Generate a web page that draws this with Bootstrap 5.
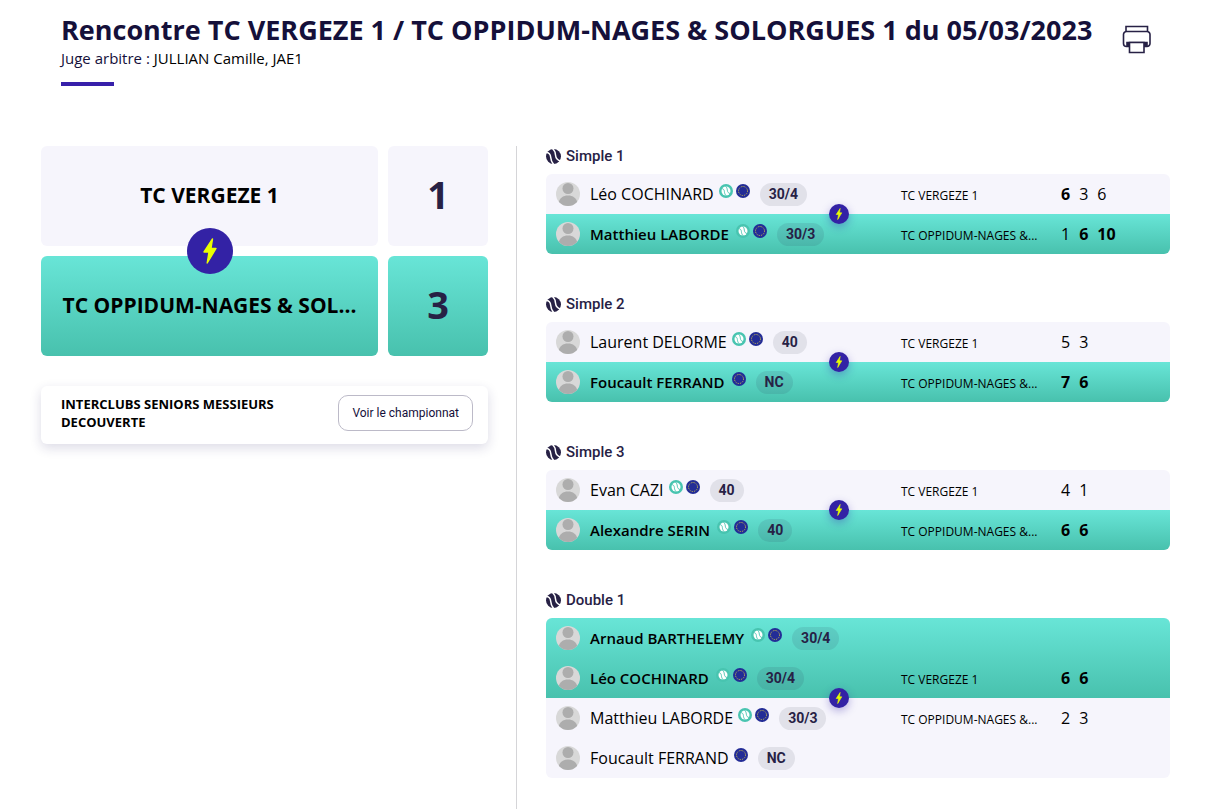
<!DOCTYPE html>
<html lang="fr">
<head>
<meta charset="utf-8">
<meta name="viewport" content="width=device-width, initial-scale=1">
<title>Rencontre TC VERGEZE 1 / TC OPPIDUM-NAGES &amp; SOLORGUES 1</title>
<link href="https://cdn.jsdelivr.net/npm/bootstrap@5.3.0/dist/css/bootstrap.min.css" rel="stylesheet">
<style>
  :root { --ink: #15103a; --navy: #272145; --violet: #3322a5; --pale: #f6f5fc; --win: linear-gradient(#68e5d7, #48c1ad); }
  body { font-family: "Open Sans", sans-serif; color: #000; background: #fff; }
  .page { padding: 12px 43px 0 41px; }
  .page-head { padding: 0 18px 0 20px; }
  .page-head h1 { font-size: 27px; line-height: 36px; font-weight: 700; color: var(--ink); }
  .referee { font-size: 15px; line-height: 20px; }
  .referee span { color: var(--ink); }
  .rule { width: 53px; height: 4px; margin-top: 14px; background: #3720aa; }
  .print-btn { margin-top: 12px; color: var(--navy); }
  .print-btn svg { width: 30px; height: 30px; }
  .meeting { margin-top: 60px; }
  .side-by-side { display: grid; grid-template-columns: minmax(0, 447fr) minmax(0, 624fr); column-gap: 58px; }
  .results { position: relative; }
  .results::before { content: ""; position: absolute; top: 0; bottom: 0; left: -30px; width: 1px; background: #d5d5d8; }
  .teams { display: grid; grid-template-columns: minmax(0, 1fr) 100px; gap: 10px; }
  .tile { height: 100px; border-radius: 6px; background: var(--pale); display: flex; align-items: center; justify-content: center; }
  .won { background: var(--win); }
  .team-name { font-size: 21px; font-weight: 700; position: relative; white-space: nowrap; }
  .points { font-size: 38px; font-weight: 700; color: var(--navy); padding-bottom: 4px; }
  .bolt { position: absolute; display: flex; align-items: center; justify-content: center; border-radius: 50%; background: var(--violet); transform: translate(-50%, -50%); z-index: 1; }
  .bolt-lg { width: 46px; height: 46px; left: 50%; top: 105px; }
  .bolt-lg svg { width: 14px; height: 26px; }
  .bolt-sm { width: 20px; height: 20px; left: 47%; box-shadow: 0 3px 8px rgba(51, 34, 165, .35); }
  .bolt-sm svg { width: 8px; height: 12px; }
  .champ { margin-top: 30px; padding: 9px 15px 13px 20px; border-radius: 6px; box-shadow: 0 4px 12px rgba(39, 33, 99, .16); }
  .champ-name { font-size: 13px; line-height: 18px; font-weight: 700; max-width: 240px; }
  .champ-btn { font: 400 12px/18px Roboto, sans-serif; color: var(--ink); border: 1px solid #bcbac8; border-radius: 10px; padding: 8px 13px; white-space: nowrap; }
  .champ-btn:hover { background: var(--pale); border-color: #bcbac8; }
  .match { margin-bottom: 40px; }
  .match h2 { font: 500 15px/21px Roboto, sans-serif; color: var(--navy); margin-bottom: 7px; gap: 5px; }
  .match h2 svg { width: 15px; height: 15px; }
  .sides { position: relative; border-radius: 6px; background: var(--pale); }
  .pair:first-of-type { border-radius: 6px 6px 0 0; }
  .pair:last-of-type { border-radius: 0 0 6px 6px; }
  .line { display: grid; grid-template-columns: minmax(0, 355fr) minmax(0, 160fr) minmax(0, 109fr); height: 40px; align-items: center; }
  .player { padding-left: 10px; font-size: 16px; white-space: nowrap; }
  .won .player { font-size: 15px; font-weight: 600; }
  .avatar { width: 24px; height: 24px; margin-right: 10px; }
  .tag { width: 14px; height: 14px; margin: 0 0 6px 3px; }
  .name + .tag { margin-left: 5px; }
  .won .name + .tag { margin-left: 7px; }
  .rank { font: 700 14px/23px Roboto, sans-serif; color: var(--navy); background: #e1e1e9; border-radius: 12px; padding: 0 9px; margin-left: 10px; }
  .won .rank { background: rgba(39, 33, 69, .1); }
  .club { font-size: 12px; padding-top: 3px; white-space: nowrap; }
  .sets { display: flex; gap: 9px; font-size: 16px; }
  .sets b { font-weight: 700; }
</style>
</head>
<body>
<svg width="0" height="0" class="position-absolute" aria-hidden="true">
  <symbol id="bolt" viewBox="0 0 14 26"><path fill="#eaff00" stroke="#eaff00" stroke-width="1.400" stroke-linejoin="round" d="M9.500 1 1 14h5l-1.800 11L13 10.500H8z"/></symbol>
  <symbol id="ball" viewBox="0 0 15 15"><circle cx="7.500" cy="7.500" r="7.500" fill="currentColor"/><path fill="none" stroke="#fff" stroke-width="1.500" d="M0 3.200c3.400.4 4.500 2.300 4.700 5 .2 3 1 5 3 7.300M6.500-.5c2 1.800 2.800 3.700 3 6.500.3 3.400 1.700 5.400 5.500 6"/></symbol>
  <symbol id="licence" viewBox="0 0 14 14"><circle cx="7" cy="7" r="7" fill="#48c4b0"/><circle cx="7" cy="7" r="4.500" fill="#fff"/><path fill="none" stroke="#48c4b0" stroke-width=".9" d="M2.500 4.500c2 .3 2.700 1.300 2.900 3 .1 1.800.6 3 1.800 4.200M6.500 2.200c1.200 1 1.700 2.200 1.800 3.900.2 2 1 3.200 3.200 3.500"/></symbol>
  <symbol id="eu" viewBox="0 0 14 14"><circle cx="7" cy="7" r="7" fill="#232c96"/><circle cx="7" cy="7" r="4.500" fill="none" stroke="#c9bb4c" stroke-width="1" stroke-dasharray="1.178 1.178"/></symbol>
  <symbol id="person" viewBox="0 0 24 24"><clipPath id="disc"><circle cx="12" cy="12" r="12"/></clipPath><g clip-path="url(#disc)"><path fill="#d8d8d8" d="M0 0h24v24H0z"/><circle cx="12" cy="6.500" r="5.500" fill="#adadad"/><path fill="#adadad" d="M2.500 21c1-5 4.500-7.500 9.500-7.500s8.500 2.500 9.500 7.500v3h-19z"/></g></symbol>
</svg>

<div class="page d-flex flex-column min-vh-100">
  <header class="page-head d-flex justify-content-between align-items-start">
    <div>
      <h1 class="mb-0">Rencontre TC VERGEZE 1 / TC OPPIDUM-NAGES &amp; SOLORGUES 1 du 05/03/2023</h1>
      <p class="referee mb-0"><span>Juge arbitre :</span> JULLIAN Camille, JAE1</p>
      <div class="rule"></div>
    </div>
    <button type="button" class="btn border-0 p-0 print-btn" aria-label="Imprimer">
      <svg class="d-block" viewBox="0 0 30 30" fill="none" stroke="currentColor" stroke-width="1.600"><path d="M4 7.500V2.500h21.500v5M7.500 22.500H4.500A3 3 0 0 1 1.500 19.500V10.500A3 3 0 0 1 4.500 7.500h20.500a3 3 0 0 1 3 3V19.500a3 3 0 0 1-3 3h-3"/><path fill="currentColor" d="M5 18.500h20v3h-2.500v-2h-15v2H5z"/><path fill="#fff" d="M7.500 18.500h14.500v10H7.500z"/></svg>
    </button>
  </header>

  <main class="meeting side-by-side flex-grow-1">
    <section>
      <div class="teams">
        <div class="tile team-name">TC VERGEZE 1<span class="bolt bolt-lg"><svg><use href="#bolt"/></svg></span></div>
        <div class="tile points">1</div>
        <div class="tile team-name won">TC OPPIDUM-NAGES &amp; SOL...</div>
        <div class="tile points won">3</div>
      </div>
      <div class="champ d-flex justify-content-between align-items-center">
        <div class="champ-name">INTERCLUBS SENIORS MESSIEURS DECOUVERTE</div>
        <button type="button" class="btn champ-btn">Voir le championnat</button>
      </div>
    </section>

    <section class="results">
      <article class="match">
        <h2 class="d-flex align-items-center"><svg><use href="#ball"/></svg>Simple 1</h2>
        <div class="sides">
          <div class="pair">
            <div class="line"><div class="player d-flex align-items-center"><svg class="avatar"><use href="#person"/></svg><span class="name">Léo COCHINARD</span><svg class="tag"><use href="#licence"/></svg><svg class="tag"><use href="#eu"/></svg><span class="rank">30/4</span></div><div class="club">TC VERGEZE 1</div><div class="sets"><b>6</b><span>3</span><span>6</span></div></div>
          </div>
          <div class="pair won">
            <div class="line"><div class="player d-flex align-items-center"><svg class="avatar"><use href="#person"/></svg><span class="name">Matthieu LABORDE</span><svg class="tag"><use href="#licence"/></svg><svg class="tag"><use href="#eu"/></svg><span class="rank">30/3</span></div><div class="club">TC OPPIDUM-NAGES &amp;...</div><div class="sets"><span>1</span><b>6</b><b>10</b></div></div>
          </div>
          <span class="bolt bolt-sm top-50"><svg><use href="#bolt"/></svg></span>
        </div>
      </article>

      <article class="match">
        <h2 class="d-flex align-items-center"><svg><use href="#ball"/></svg>Simple 2</h2>
        <div class="sides">
          <div class="pair">
            <div class="line"><div class="player d-flex align-items-center"><svg class="avatar"><use href="#person"/></svg><span class="name">Laurent DELORME</span><svg class="tag"><use href="#licence"/></svg><svg class="tag"><use href="#eu"/></svg><span class="rank">40</span></div><div class="club">TC VERGEZE 1</div><div class="sets"><span>5</span><span>3</span></div></div>
          </div>
          <div class="pair won">
            <div class="line"><div class="player d-flex align-items-center"><svg class="avatar"><use href="#person"/></svg><span class="name">Foucault FERRAND</span><svg class="tag"><use href="#eu"/></svg><span class="rank">NC</span></div><div class="club">TC OPPIDUM-NAGES &amp;...</div><div class="sets"><b>7</b><b>6</b></div></div>
          </div>
          <span class="bolt bolt-sm top-50"><svg><use href="#bolt"/></svg></span>
        </div>
      </article>

      <article class="match">
        <h2 class="d-flex align-items-center"><svg><use href="#ball"/></svg>Simple 3</h2>
        <div class="sides">
          <div class="pair">
            <div class="line"><div class="player d-flex align-items-center"><svg class="avatar"><use href="#person"/></svg><span class="name">Evan CAZI</span><svg class="tag"><use href="#licence"/></svg><svg class="tag"><use href="#eu"/></svg><span class="rank">40</span></div><div class="club">TC VERGEZE 1</div><div class="sets"><span>4</span><span>1</span></div></div>
          </div>
          <div class="pair won">
            <div class="line"><div class="player d-flex align-items-center"><svg class="avatar"><use href="#person"/></svg><span class="name">Alexandre SERIN</span><svg class="tag"><use href="#licence"/></svg><svg class="tag"><use href="#eu"/></svg><span class="rank">40</span></div><div class="club">TC OPPIDUM-NAGES &amp;...</div><div class="sets"><b>6</b><b>6</b></div></div>
          </div>
          <span class="bolt bolt-sm top-50"><svg><use href="#bolt"/></svg></span>
        </div>
      </article>

      <article class="match mb-0">
        <h2 class="d-flex align-items-center"><svg><use href="#ball"/></svg>Double 1</h2>
        <div class="sides">
          <div class="pair won">
            <div class="line"><div class="player d-flex align-items-center"><svg class="avatar"><use href="#person"/></svg><span class="name">Arnaud BARTHELEMY</span><svg class="tag"><use href="#licence"/></svg><svg class="tag"><use href="#eu"/></svg><span class="rank">30/4</span></div></div>
            <div class="line"><div class="player d-flex align-items-center"><svg class="avatar"><use href="#person"/></svg><span class="name">Léo COCHINARD</span><svg class="tag"><use href="#licence"/></svg><svg class="tag"><use href="#eu"/></svg><span class="rank">30/4</span></div><div class="club">TC VERGEZE 1</div><div class="sets"><b>6</b><b>6</b></div></div>
          </div>
          <div class="pair">
            <div class="line"><div class="player d-flex align-items-center"><svg class="avatar"><use href="#person"/></svg><span class="name">Matthieu LABORDE</span><svg class="tag"><use href="#licence"/></svg><svg class="tag"><use href="#eu"/></svg><span class="rank">30/3</span></div><div class="club">TC OPPIDUM-NAGES &amp;...</div><div class="sets"><span>2</span><span>3</span></div></div>
            <div class="line"><div class="player d-flex align-items-center"><svg class="avatar"><use href="#person"/></svg><span class="name">Foucault FERRAND</span><svg class="tag"><use href="#eu"/></svg><span class="rank">NC</span></div></div>
          </div>
          <span class="bolt bolt-sm top-50"><svg><use href="#bolt"/></svg></span>
        </div>
      </article>
    </section>
  </main>
</div>
<script src="https://cdn.jsdelivr.net/npm/bootstrap@5.3.0/dist/js/bootstrap.bundle.min.js"></script>
</body>
</html>
